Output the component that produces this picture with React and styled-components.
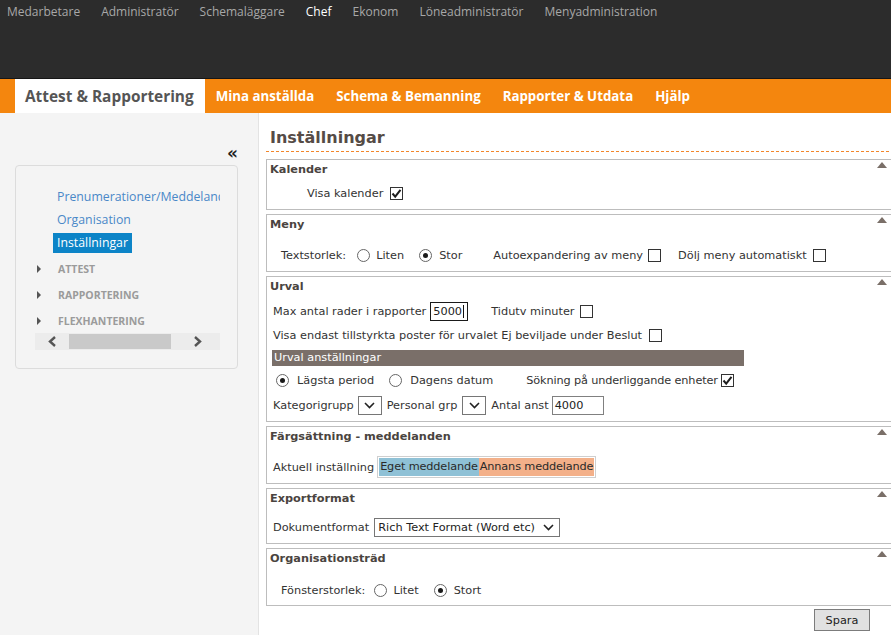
import React from "react";
import styled, { createGlobalStyle } from "styled-components";

const roles = ["Medarbetare", "Administratör", "Schemaläggare", "Chef", "Ekonom", "Löneadministratör", "Menyadministration"];
const tabs = ["Attest & Rapportering", "Mina anställda", "Schema & Bemanning", "Rapporter & Utdata", "Hjälp"];

const Check = ({ checked, ml }) => (
  <CheckBox $ml={ml}>
    {checked && (
      <svg width="11" height="11" viewBox="0 0 11 11">
        <path d="M1.5 5.5 L4.2 8.6 L9.5 1.8" fill="none" stroke="#1d1d1d" strokeWidth="2" />
      </svg>
    )}
  </CheckBox>
);

const Chevron = () => (
  <svg width="11" height="7" viewBox="0 0 11 7">
    <path d="M1 1 L5.5 5.5 L10 1" fill="none" stroke="#222" strokeWidth="1.6" />
  </svg>
);

const Collapse = () => (
  <svg width="10" height="6" viewBox="0 0 10 6">
    <path d="M0 6 L5 0 L10 6 Z" fill="#7a6f68" />
  </svg>
);

const Panel = ({ title, top, bottom = 4, children }) => (
  <Box>
    <BoxHead>
      <span>{title}</span>
      <Collapse />
    </BoxHead>
    <BoxBody $top={top} $bottom={bottom}>{children}</BoxBody>
  </Box>
);

const App = () => {
  return (
    <Page>
      <GlobalStyle />
      <TopBar>
        {roles.map((r) => (
          <Role key={r} $active={r === "Chef"}>{r}</Role>
        ))}
      </TopBar>
      <TabBar>
        {tabs.map((t, i) => (
          <Tab key={t} $active={i === 0}>{t}</Tab>
        ))}
      </TabBar>
      <Body>
        <Sidebar>
          <CollapseSide>«</CollapseSide>
          <SideBox>
            <Tree>
              <Links>
                <SideLink>Prenumerationer/Meddelanden</SideLink>
                <SideLink>Organisation</SideLink>
                <SideLink $active>Inställningar</SideLink>
              </Links>
              <Section><Caret />ATTEST</Section>
              <Section><Caret />RAPPORTERING</Section>
              <Section><Caret />FLEXHANTERING</Section>
              <Scroll>
                <ScrollBtn>
                  <svg width="9" height="11" viewBox="0 0 9 11"><path d="M7 1 L2 5.5 L7 10" fill="none" stroke="#555" strokeWidth="2.4" /></svg>
                </ScrollBtn>
                <Thumb />
                <ScrollBtn $right>
                  <svg width="9" height="11" viewBox="0 0 9 11"><path d="M2 1 L7 5.5 L2 10" fill="none" stroke="#555" strokeWidth="2.4" /></svg>
                </ScrollBtn>
              </Scroll>
            </Tree>
          </SideBox>
        </Sidebar>
        <Main>
          <Title>Inställningar</Title>
          <Panels>
            <Panel title="Kalender" top={1}>
              <Row $indent={40}>
                <Text>Visa kalender</Text>
                <Check checked ml={7} />
              </Row>
            </Panel>
            <Panel title="Meny" top={8}>
              <Row $indent={14}>
                <Text>Textstorlek:</Text>
                <Radio $ml={11} />
                <Text $ml={6}>Liten</Text>
                <Radio $ml={15} $checked />
                <Text $ml={7}>Stor</Text>
                <Text $ml={31}>Autoexpandering av meny</Text>
                <Check ml={5} />
                <Text $ml={17}>Dölj meny automatiskt</Text>
                <Check ml={6} />
              </Row>
            </Panel>
            <Panel title="Urval" top={2} bottom={3}>
              <Row $indent={6}>
                <Text>Max antal rader i rapporter</Text>
                <Field $ml={4} $w={38} $focus>5000<Cursor /></Field>
                <Text $ml={23}>Tidutv minuter</Text>
                <Check ml={6} />
              </Row>
              <Row $indent={6}>
                <Text>Visa endast tillstyrkta poster för urvalet Ej beviljade under Beslut</Text>
                <Check ml={7} />
              </Row>
              <SubBar>Urval anställningar</SubBar>
              <Row $indent={6}>
                <Radio $ml={3} $checked />
                <Text $ml={8}>Lägsta period</Text>
                <Radio $ml={15} />
                <Text $ml={8}>Dagens datum</Text>
                <Text $ml={33} $tight>Sökning på underliggande enheter</Text>
                <Check checked ml={3} />
              </Row>
              <Row $indent={6} $h={26}>
                <Text>Kategorigrupp</Text>
                <Select $ml={4} $w={24}><Chevron /></Select>
                <Text $ml={5}>Personal grp</Text>
                <Select $ml={5} $w={24}><Chevron /></Select>
                <Text $ml={5}>Antal anst</Text>
                <Field $ml={3} $w={52}>4000</Field>
              </Row>
            </Panel>
            <Panel title="Färgsättning - meddelanden" top={8}>
              <Row $indent={6}>
                <Text>Aktuell inställning</Text>
                <Swatches>
                  <Swatch $bg="#8fc1d6">Eget meddelande</Swatch>
                  <Swatch $bg="#f3b089">Annans meddelande</Swatch>
                </Swatches>
              </Row>
            </Panel>
            <Panel title="Exportformat" top={6}>
              <Row $indent={6}>
                <Text>Dokumentformat</Text>
                <Select $ml={5} $w={186} $wide>
                  <span>Rich Text Format (Word etc)</span>
                  <Chevron />
                </Select>
              </Row>
            </Panel>
            <Panel title="Organisationsträd" top={9} bottom={3}>
              <Row $indent={14}>
                <Text>Fönsterstorlek:</Text>
                <Radio $ml={9} />
                <Text $ml={6}>Litet</Text>
                <Radio $ml={15} $checked />
                <Text $ml={7}>Stort</Text>
              </Row>
            </Panel>
            <Footer>
              <Button>Spara</Button>
            </Footer>
          </Panels>
        </Main>
      </Body>
    </Page>
  );
};

export default App;

const GlobalStyle = createGlobalStyle`
  html, body {
    margin: 0;
    height: 100%;
    overflow: hidden;
  }
  body {
    font-family: "DejaVu Sans", Verdana, sans-serif;
    background: #fff;
  }
  #root {
    height: 100%;
  }
`;

const Page = styled.div`
  height: 100%;
  display: flex;
  flex-direction: column;
`;

const TopBar = styled.div`
  height: 79px;
  flex-shrink: 0;
  background: #2c2c2c;
  border-bottom: 1px solid #161616;
  display: flex;
  align-items: flex-start;
  gap: 21px;
  padding: 3px 0 0 7px;
  box-sizing: border-box;
`;

const Role = styled.span`
  font-family: "Open Sans", sans-serif;
  font-size: 12px;
  line-height: 18px;
  color: ${(p) => (p.$active ? "#fff" : "#a8a8a8")};
`;

const TabBar = styled.div`
  height: 34px;
  flex-shrink: 0;
  background: #f4860e;
  display: flex;
  padding-left: 15px;
`;

const Tab = styled.div`
  display: flex;
  align-items: center;
  padding: ${(p) => (p.$active ? "0 11px 0 10px" : "0 11px")};
  font-family: "Open Sans", sans-serif;
  font-weight: 700;
  font-size: ${(p) => (p.$active ? "15.4px" : "13.3px")};
  color: ${(p) => (p.$active ? "#555" : "#fff")};
  background: ${(p) => (p.$active ? "#fff" : "transparent")};
`;

const Body = styled.div`
  flex: 1;
  display: flex;
  min-height: 0;
`;

const Sidebar = styled.div`
  width: 259px;
  flex-shrink: 0;
  box-sizing: border-box;
  background: #f4f4f4;
  border-right: 1px solid #e3e3e3;
  padding: 0 20px 0 15px;
`;

const CollapseSide = styled.div`
  text-align: right;
  padding-top: 32px;
  line-height: 16px;
  height: 16px;
  font-size: 17px;
  font-weight: 700;
  color: #1e1e1e;
  margin-bottom: 4px;
`;

const SideBox = styled.div`
  border: 1px solid #dcdcdc;
  border-radius: 4px;
  padding: 21px 0 18px 19px;
`;

const Tree = styled.div`
  width: 185px;
  overflow: hidden;
`;

const Links = styled.div`
  padding-left: 18px;
`;

const SideLink = styled.div`
  width: max-content;
  padding: 0 4px;
  line-height: 20px;
  margin-bottom: 3px;
  white-space: nowrap;
  font-family: "Open Sans", sans-serif;
  font-size: 12.3px;
  color: ${(p) => (p.$active ? "#fff" : "#4a88c8")};
  background: ${(p) => (p.$active ? "#0c84c7" : "transparent")};
`;

const Section = styled.div`
  height: 26px;
  display: flex;
  align-items: center;
  padding-left: 2px;
  font-family: "Open Sans", sans-serif;
  font-weight: 700;
  font-size: 10.5px;
  color: #9b9b9b;
`;

const Caret = styled.span`
  width: 0;
  height: 0;
  border-left: 4px solid #555;
  border-top: 4px solid transparent;
  border-bottom: 4px solid transparent;
  margin-right: 17px;
`;

const Scroll = styled.div`
  height: 17px;
  margin-top: -1px;
  background: #ececec;
  display: flex;
  align-items: center;
`;

const ScrollBtn = styled.div`
  width: ${(p) => (p.$right ? "auto" : "34px")};
  padding-left: ${(p) => (p.$right ? "22px" : "0")};
  display: flex;
  justify-content: center;
`;

const Thumb = styled.div`
  width: 102px;
  height: 15px;
  background: #c9c9c9;
`;

const Main = styled.div`
  flex: 1;
  min-width: 0;
  overflow: hidden;
  padding-left: 7px;
  color: #333;
`;

const Title = styled.div`
  font-size: 16px;
  font-weight: 700;
  color: #554b46;
  line-height: 22px;
  padding: 14px 0 0 4px;
  margin: 0 -5px 7px 0;
  &::after {
    content: "";
    display: block;
    height: 1px;
    margin: 2px 0 0 -4px;
    background: repeating-linear-gradient(90deg, #f2862a 0 3px, transparent 3px 5px);
  }
`;

const Panels = styled.div`
  margin-right: -5px;
`;

const Box = styled.div`
  border: 1px solid #bdbdbd;
  margin-bottom: 4px;
`;

const BoxHead = styled.div`
  height: 20px;
  display: flex;
  justify-content: space-between;
  align-items: flex-start;
  padding: 0 8px 0 3px;
  line-height: 20px;
  font-size: 11.3px;
  font-weight: 700;
  color: #4a4440;
  svg {
    margin-top: 2px;
  }
`;

const BoxBody = styled.div`
  padding: ${(p) => p.$top}px 0 ${(p) => p.$bottom}px 0;
`;

const Row = styled.div`
  height: ${(p) => p.$h || 24}px;
  display: flex;
  align-items: center;
  padding-left: ${(p) => p.$indent}px;
  font-size: 11.3px;
  color: #333;
  white-space: nowrap;
`;

const Text = styled.span`
  margin-left: ${(p) => p.$ml || 0}px;
  letter-spacing: ${(p) => (p.$tight ? "-0.15px" : "normal")};
`;

const CheckBox = styled.span`
  width: 13px;
  height: 13px;
  box-sizing: border-box;
  border: 1px solid #333;
  background: #fff;
  display: inline-flex;
  align-items: center;
  justify-content: center;
  margin-left: ${(p) => p.$ml || 0}px;
  flex-shrink: 0;
`;

const Radio = styled.span`
  width: 13px;
  height: 13px;
  box-sizing: border-box;
  border: 1px solid #666;
  border-radius: 50%;
  background: #fff;
  display: inline-flex;
  align-items: center;
  justify-content: center;
  margin-left: ${(p) => p.$ml || 0}px;
  flex-shrink: 0;
  &::after {
    content: "";
    display: ${(p) => (p.$checked ? "block" : "none")};
    width: 5px;
    height: 5px;
    border-radius: 50%;
    background: #1a1a1a;
  }
`;

const Field = styled.span`
  width: ${(p) => p.$w}px;
  height: 19px;
  box-sizing: border-box;
  border: 1px solid ${(p) => (p.$focus ? "#1a1a1a" : "#808080")};
  display: inline-flex;
  align-items: center;
  padding-left: 2px;
  margin-left: ${(p) => p.$ml || 0}px;
  color: #222;
`;

const Cursor = styled.span`
  width: 1px;
  height: 13px;
  background: #111;
  margin-left: 1px;
`;

const Select = styled.span`
  width: ${(p) => p.$w}px;
  height: 19px;
  box-sizing: border-box;
  border: 1px solid #767676;
  display: inline-flex;
  align-items: center;
  justify-content: ${(p) => (p.$wide ? "space-between" : "center")};
  padding: ${(p) => (p.$wide ? "0 5px 0 3px" : "0")};
  margin-left: ${(p) => p.$ml || 0}px;
  color: #222;
`;

const SubBar = styled.div`
  width: 472px;
  height: 16px;
  line-height: 16px;
  margin: 3px 0 2px 5px;
  padding-left: 2px;
  box-sizing: border-box;
  background: #7a6f69;
  color: #fff;
  font-size: 11.3px;
`;

const Swatches = styled.span`
  display: inline-flex;
  border: 1px solid #cfcfcf;
  padding: 1px;
  margin-left: 3px;
`;

const Swatch = styled.span`
  background: ${(p) => p.$bg};
  line-height: 18px;
  padding: 0 1px;
  letter-spacing: -0.15px;
  color: #2a2a2a;
`;

const Footer = styled.div`
  display: flex;
  justify-content: flex-end;
  padding-right: 26px;
  margin-top: -1px;
`;

const Button = styled.button`
  width: 56px;
  height: 22px;
  border: 1px solid #7c7c7c;
  background: #e1e1e1;
  font-family: "DejaVu Sans", Verdana, sans-serif;
  font-size: 11.3px;
  color: #222;
  padding: 0;
`;
